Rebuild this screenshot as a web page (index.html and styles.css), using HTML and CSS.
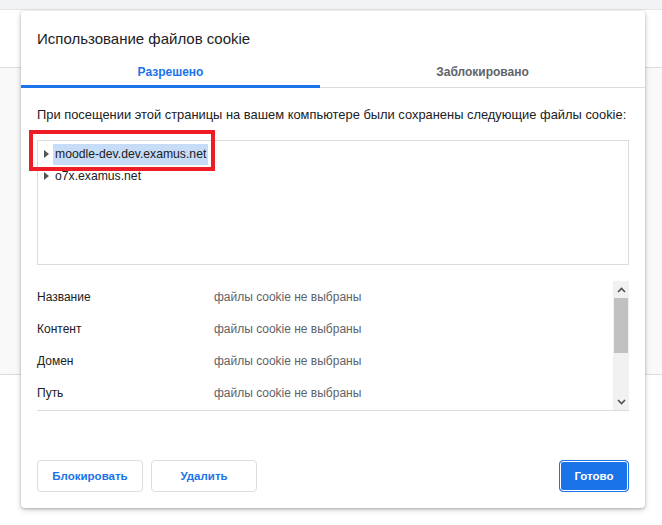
FILE: index.html
```html
<!DOCTYPE html>
<html lang="ru">
<head>
<meta charset="utf-8">
<title>Использование файлов cookie</title>
<link rel="stylesheet" href="styles.css">
</head>
<body>
<div class="page">
  <div class="strip"></div>
  <div class="band-top"></div>
  <div class="band-mid"></div>
  <div class="band-bottom"></div>

  <div class="dialog">
    <div class="title">Использование файлов cookie</div>
    <div class="tabs">
      <div class="tab tab-active">Разрешено</div>
      <div class="tab">Заблокировано</div>
    </div>
    <div class="body">
      <p class="desc">При посещении этой страницы на вашем компьютере были сохранены следующие файлы cookie:</p>
      <div class="tree">
        <div class="node">
          <svg class="tri" width="5" height="8" viewBox="0 0 5 8"><path d="M0 0 L5 4 L0 8 Z" fill="#555"/></svg>
          <span class="label selected">moodle-dev.dev.examus.net</span>
        </div>
        <div class="node">
          <svg class="tri" width="5" height="8" viewBox="0 0 5 8"><path d="M0 0 L5 4 L0 8 Z" fill="#555"/></svg>
          <span class="label">o7x.examus.net</span>
        </div>
      </div>
      <div class="details">
        <div class="rows">
          <div class="row"><span class="key">Название</span><span class="val">файлы cookie не выбраны</span></div>
          <div class="row"><span class="key">Контент</span><span class="val">файлы cookie не выбраны</span></div>
          <div class="row"><span class="key">Домен</span><span class="val">файлы cookie не выбраны</span></div>
          <div class="row"><span class="key">Путь</span><span class="val">файлы cookie не выбраны</span></div>
        </div>
        <div class="scrollbar">
          <div class="sb-btn">
            <svg width="9" height="6" viewBox="0 0 9 6"><path d="M1 5 L4.5 1.5 L8 5" fill="none" stroke="#505050" stroke-width="1.6"/></svg>
          </div>
          <div class="sb-thumb"></div>
          <div class="sb-track"></div>
          <div class="sb-btn">
            <svg width="9" height="6" viewBox="0 0 9 6"><path d="M1 1 L4.5 4.5 L8 1" fill="none" stroke="#505050" stroke-width="1.6"/></svg>
          </div>
        </div>
      </div>
    </div>
    <div class="footer">
      <button class="btn">Блокировать</button>
      <button class="btn">Удалить</button>
      <span class="spacer"></span>
      <button class="btn btn-primary">Готово</button>
    </div>
  </div>

  <div class="highlight-box"></div>
</div>
</body>
</html>
```

FILE: styles.css
```css
* { box-sizing: border-box; }
html, body { margin: 0; padding: 0; }
body {
  width: 662px;
  height: 525px;
  overflow: hidden;
  background: #ffffff;
  font-family: "Liberation Sans", Arial, sans-serif;
  color: #202124;
}
.page {
  position: relative;
  width: 662px;
  height: 525px;
}
.strip { height: 10px; background: #f1f3f4; border-bottom: 1px solid #e3e5e8; }
.band-top { height: 58px; background: #ffffff; border-bottom: 1px solid #dadce0; }
.band-mid { height: 307px; background: #f9f9fa; border-bottom: 1px solid #dadce0; }
.band-bottom { height: 149px; background: #ffffff; }

.dialog {
  position: absolute;
  left: 21px;
  top: 11px;
  width: 624px;
  height: 497px;
  background: #ffffff;
  border-radius: 4px;
  box-shadow: 0 1px 3px rgba(60, 64, 67, 0.35), 0 2px 6px rgba(60, 64, 67, 0.18);
  display: flex;
  flex-direction: column;
}
.title {
  padding: 18px 16px 0 16px;
  font-size: 15px;
  line-height: 20px;
  color: #202124;
  height: 49px;
}
.tabs {
  display: flex;
  height: 28px;
  border-bottom: 1px solid #dadce0;
}
.tab {
  flex: 1 1 0;
  text-align: center;
  font-size: 12px;
  font-weight: bold;
  color: #5f6368;
  line-height: 24px;
}
.tab-active {
  flex: 0 0 299px;
  color: #1a73e8;
  border-bottom: 3px solid #1a73e8;
  margin-bottom: -1px;
}
.body {
  padding: 0 16px;
  flex: 1 1 auto;
}
.desc {
  margin: 18px 0 0 0;
  font-size: 12.9px;
  line-height: 18px;
  color: #202124;
  white-space: nowrap;
}
.tree {
  margin-top: 16px;
  height: 125px;
  border: 1px solid #dadce0;
  padding: 2px 0 0 6px;
}
.node {
  display: flex;
  align-items: center;
  height: 22px;
}
.tri { margin-right: 4px; }
.label {
  font-size: 12.2px;
  line-height: 21px;
  padding: 0 2px 0 2px;
  color: #202124;
}
.selected { background: #c6dcf7; }

.details {
  margin-top: 16px;
  height: 130px;
  border-bottom: 1px solid #dadce0;
  display: flex;
}
.rows { flex: 1 1 auto; }
.row {
  display: flex;
  height: 32px;
  align-items: center;
  font-size: 12px;
}
.key { width: 177px; color: #202124; }
.val { color: #5f6368; }
.scrollbar {
  width: 16px;
  display: flex;
  flex-direction: column;
  background: #f1f1f1;
}
.sb-btn {
  height: 17px;
  display: flex;
  align-items: center;
  justify-content: center;
}
.sb-thumb { height: 55px; background: #c1c1c1; margin: 0 1px; }
.sb-track { flex: 1 1 auto; }

.footer {
  display: flex;
  padding: 0 16px 16px 16px;
  gap: 8px;
  align-items: center;
}
.spacer { flex: 1 1 auto; }
.btn {
  height: 32px;
  width: 106px;
  border: 1px solid #dadce0;
  border-radius: 4px;
  background: #ffffff;
  color: #1a73e8;
  font-family: "Liberation Sans", Arial, sans-serif;
  font-size: 11.5px;
  font-weight: bold;
  padding: 0;
}
.btn-primary {
  width: 70px;
  background: #1a73e8;
  color: #ffffff;
  border: 1px solid #1a73e8;
  box-shadow: inset 0 0 0 1px #ffffff;
}
.highlight-box {
  position: absolute;
  left: 29px;
  top: 130px;
  width: 186px;
  height: 41px;
  border: 4px solid #ee1c25;
}
```
